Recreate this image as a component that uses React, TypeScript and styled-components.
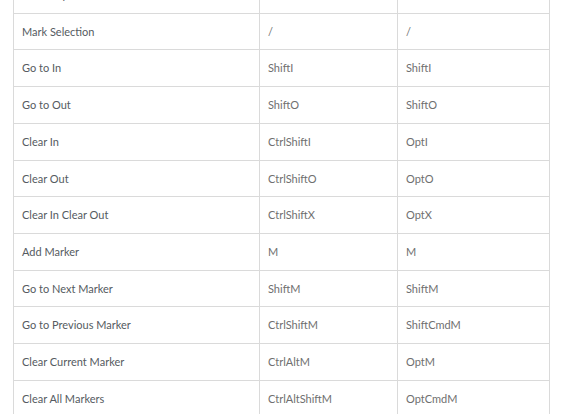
import React from "react";
import styled, { createGlobalStyle } from "styled-components";

const Global = createGlobalStyle`
  html, body { margin: 0; padding: 0; background: #fff; }
  body { font-family: Lato, "Noto Sans", sans-serif; overflow: hidden; }
`;

const Page = styled.div`
  height: 414px;
  overflow: hidden;
  padding-left: 13px;
`;

const Table = styled.table`
  border-collapse: collapse;
  width: 536px;
  margin-top: -24px;
  table-layout: fixed;
`;

const Row = styled.tr``;

const Cell = styled.td<{ $kind?: "name" | "key" }>`
  border: 1px solid #dadada;
  padding: 12px 8px;
  line-height: 11.7px;
  font-size: 11px;
  color: ${(p) => (p.$kind === "key" ? "#6f6f6f" : "#555b61")};
  white-space: nowrap;
  vertical-align: middle;
`;

const rows: [string, string, string][] = [
  ["Mark Clip", "X", "X"],
  ["Mark Selection", "/", "/"],
  ["Go to In", "ShiftI", "ShiftI"],
  ["Go to Out", "ShiftO", "ShiftO"],
  ["Clear In", "CtrlShiftI", "OptI"],
  ["Clear Out", "CtrlShiftO", "OptO"],
  ["Clear In Clear Out", "CtrlShiftX", "OptX"],
  ["Add Marker", "M", "M"],
  ["Go to Next Marker", "ShiftM", "ShiftM"],
  ["Go to Previous Marker", "CtrlShiftM", "ShiftCmdM"],
  ["Clear Current Marker", "CtrlAltM", "OptM"],
  ["Clear All Markers", "CtrlAltShiftM", "OptCmdM"],
];

export default function App() {
  return (
    <Page>
      <Global />
      <Table>
        <colgroup>
          <col style={{ width: 246 }} />
          <col style={{ width: 138 }} />
          <col style={{ width: 152 }} />
        </colgroup>
        <tbody>
          {rows.map(([name, win, mac]) => (
            <Row key={name}>
              <Cell $kind="name">{name}</Cell>
              <Cell $kind="key">{win}</Cell>
              <Cell $kind="key">{mac}</Cell>
            </Row>
          ))}
        </tbody>
      </Table>
    </Page>
  );
}
